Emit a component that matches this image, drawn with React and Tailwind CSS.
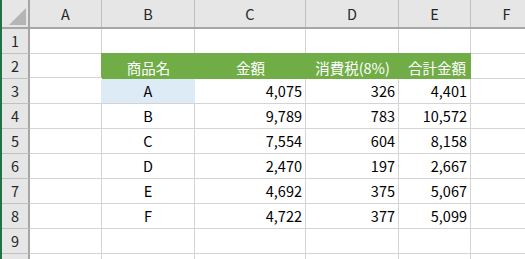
import React from "react";

const font = { fontFamily: '"Noto Sans CJK JP", "Noto Sans", sans-serif' };

const cols = [
  { key: "A", w: "w-[72px]" },
  { key: "B", w: "w-[93px]" },
  { key: "C", w: "w-[111px]" },
  { key: "D", w: "w-[93px]" },
  { key: "E", w: "w-[72px]" },
  { key: "F", w: "w-[72px]" },
];

const data = [
  ["A", "4,075", "326", "4,401"],
  ["B", "9,789", "783", "10,572"],
  ["C", "7,554", "604", "8,158"],
  ["D", "2,470", "197", "2,667"],
  ["E", "4,692", "375", "5,067"],
  ["F", "4,722", "377", "5,099"],
];

function Cell({ w, className = "", children }) {
  return (
    <div
      className={`${w} shrink-0 h-full flex items-end pb-[2px] border-r border-[#d4d4d4] ${className}`}
    >
      {children}
    </div>
  );
}

function RowHead({ n }) {
  return (
    <div className="w-[28px] shrink-0 h-full bg-[#e6e6e6] border-r-2 border-r-[#a6a6a6] border-b border-b-[#c0c0c0] flex items-center justify-center text-[14.5px] text-[#262626] leading-none">
      {n}
    </div>
  );
}

export default function App() {
  const rows = [];
  rows.push(
    <div key={1} className="flex h-[25px] shrink-0">
      <RowHead n={1} />
      <div className="flex border-b border-[#d4d4d4]">
        {cols.map((c) => (
          <Cell key={c.key} w={c.w} />
        ))}
      </div>
    </div>
  );
  rows.push(
    <div key={2} className="flex h-[25px] shrink-0">
      <RowHead n={2} />
      <div className="flex items-stretch">
        <Cell w="w-[72px]" className="border-r-[#70ad47] border-b border-b-[#d4d4d4] -mt-px h-[26px]" />
        <div className="w-[369px] shrink-0 -mt-px h-[26px] bg-[#70ad47] flex text-white text-[14.5px] leading-none">
          <div className="w-[93px] flex items-end justify-center pb-[4px]">商品名</div>
          <div className="w-[111px] flex items-end justify-center pb-[4px]">金額</div>
          <div className="w-[93px] flex items-end justify-center pb-[4px] whitespace-nowrap">消費税(8%)</div>
          <div className="w-[72px] flex items-end justify-center pb-[4px] pl-[4px]">合計金額</div>
        </div>
        <Cell w="w-[72px]" className="border-b border-b-[#d4d4d4]" />
      </div>
    </div>
  );
  data.forEach((d, i) => {
    const n = i + 3;
    const first = i === 0;
    rows.push(
      <div key={n} className="flex h-[25px] shrink-0">
        <RowHead n={n} />
        <div className="flex border-b border-[#d4d4d4] text-[14.5px] leading-none text-black">
          <Cell w="w-[72px]" className={first ? "border-r-[#ddebf7]" : ""} />
          <Cell
            w="w-[93px]"
            className={`justify-center pb-[5px] ${first ? "bg-[#ddebf7] border-r-[#ddebf7] -mb-px h-[25px] relative" : ""}`}
          >
            {d[0]}
          </Cell>
          <Cell w="w-[111px]" className="justify-end pr-[3px] pb-[5px]">{d[1]}</Cell>
          <Cell w="w-[93px]" className="justify-end pr-[3px] pb-[5px]">{d[2]}</Cell>
          <Cell w="w-[72px]" className="justify-end pr-[3px] pb-[5px]">{d[3]}</Cell>
          <Cell w="w-[72px]" />
        </div>
      </div>
    );
  });
  rows.push(
    <div key={9} className="flex h-[25px] shrink-0">
      <RowHead n={9} />
      <div className="flex border-b border-[#d4d4d4]">
        {cols.map((c) => (
          <Cell key={c.key} w={c.w} />
        ))}
      </div>
    </div>
  );
  rows.push(
    <div key={10} className="flex h-[25px] shrink-0">
      <RowHead n="" />
      <div className="flex">
        {cols.map((c) => (
          <Cell key={c.key} w={c.w} />
        ))}
      </div>
    </div>
  );

  return (
    <div className="w-[525px] h-[259px] overflow-hidden bg-white flex" style={font}>
      <div className="w-[2px] shrink-0 bg-[#217346]" />
      <div className="flex flex-col">
        <div className="flex h-[29px] shrink-0 bg-[#e6e6e6] border-b-2 border-[#a6a6a6] text-[14.5px] text-[#262626] leading-none">
          <div className="w-[28px] shrink-0 h-full border-r-2 border-r-[#a6a6a6] relative">
            <svg className="absolute left-0 top-0" width="26" height="27" viewBox="0 0 26 27">
              <polygon points="7,25 24,8 24,25" fill="#b5b5b5" />
            </svg>
          </div>
          {cols.map((c) => (
            <div
              key={c.key}
              className={`${c.w} shrink-0 h-full border-r border-[#c0c0c0] flex items-end justify-center pb-[6px]`}
            >
              {c.key}
            </div>
          ))}
        </div>
        {rows}
      </div>
    </div>
  );
}
